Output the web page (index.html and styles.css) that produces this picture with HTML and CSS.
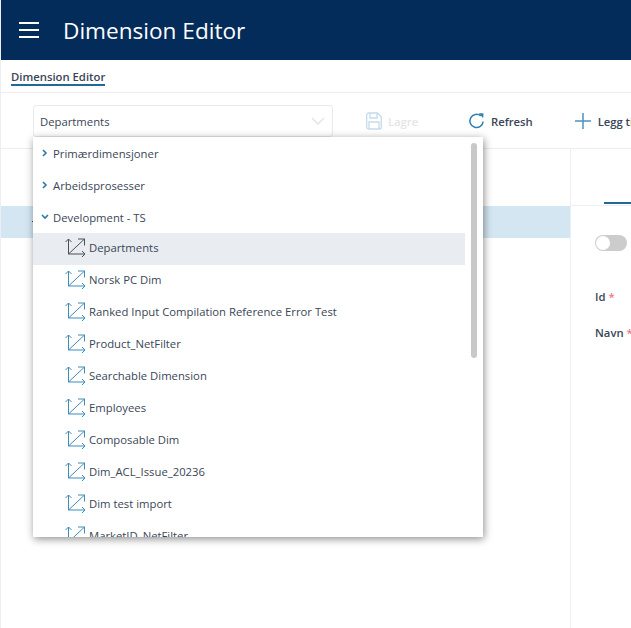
FILE: index.html
```html
<!DOCTYPE html>
<html lang="en">
<head>
  <meta charset="UTF-8" />
  <title>Dimension Editor</title>
  <link rel="stylesheet" href="styles.css">
</head>
<body>
  <svg class="defs" width="0" height="0">
    <symbol id="dim" viewBox="0 0 21 19">
      <path d="M3.500 16V1M0.500 4l3-3 3 3M3.500 16H20M17 13l3 3-3 3M3.500 16L19.500 1M13 1h6.500v6.500" fill="none" stroke="currentColor" stroke-width="1"/>
    </symbol>
  </svg>
  <div class="app">
    <header class="topbar">
      <div class="burger"><span></span><span></span><span></span></div>
      <h1>Dimension Editor</h1>
    </header>
    <nav class="tabs"><span class="tab">Dimension Editor</span></nav>
    <div class="toolbar">
      <div class="select">
        <span class="select-value">Departments</span>
        <svg class="caret" width="14" height="8" viewBox="0 0 14 8"><path d="M1 1l6 6 6-6" fill="none" stroke="#e3e5ea" stroke-width="1.500"/></svg>
      </div>
      <div class="tool disabled">
        <svg width="16" height="18" viewBox="0 0 16 18"><path d="M0.700 3a2 2 0 0 1 2-2h8.800l3.800 3.800V15a2 2 0 0 1-2 2H2.700a2 2 0 0 1-2-2zM4 1v5h7V1M3 17v-7h10v7" fill="none" stroke="#c3dcec" stroke-width="1.300"/></svg>
        <span class="tool-label">Lagre</span>
      </div>
      <div class="tool refresh">
        <svg width="17" height="18" viewBox="0 0 18 18"><path d="M16 9.500A7 7 0 1 1 13.500 3.500" fill="none" stroke="#2f7fb0" stroke-width="1.600"/><path d="M11.500 0.500l5 0.500-0.500 5z" fill="#2f7fb0"/></svg>
        <span class="tool-label">Refresh</span>
      </div>
      <div class="tool add">
        <svg width="18" height="18" viewBox="0 0 18 18"><path d="M9 1v16M1 9h16" fill="none" stroke="#4b93bf" stroke-width="1.500"/></svg>
        <span class="tool-label">Legg til</span>
      </div>
    </div>
    <div class="panes">
      <div class="left">
        <div class="left-head"></div>
        <div class="left-row"><span class="peek"></span></div>
      </div>
      <div class="right">
        <div class="right-head"><span class="right-tab"></span></div>
        <div class="form">
          <div class="switch"><span class="knob"></span></div>
          <div class="field first">Id <em>*</em></div>
          <div class="field">Navn <em>*</em></div>
        </div>
      </div>
    </div>

    <div class="dropdown">
      <div class="thumb"></div>
      <ul class="list">
        <li class="group"><svg width="8" height="8" viewBox="0 0 6 8"><path d="M1 1l3 3-3 3" fill="none" stroke="#2a7aa8" stroke-width="1.600"/></svg>Primærdimensjoner</li>
        <li class="group"><svg width="8" height="8" viewBox="0 0 6 8"><path d="M1 1l3 3-3 3" fill="none" stroke="#2a7aa8" stroke-width="1.600"/></svg>Arbeidsprosesser</li>
        <li class="group"><svg width="8" height="6" viewBox="0 0 8 6"><path d="M1 1l3 3 3-3" fill="none" stroke="#2a7aa8" stroke-width="1.600"/></svg>Development - TS</li>
        <li class="item active"><svg width="21" height="19"><use href="#dim"/></svg>Departments</li>
        <li class="item"><svg width="21" height="19"><use href="#dim"/></svg>Norsk PC Dim</li>
        <li class="item"><svg width="21" height="19"><use href="#dim"/></svg>Ranked Input Compilation Reference Error Test</li>
        <li class="item"><svg width="21" height="19"><use href="#dim"/></svg>Product_NetFilter</li>
        <li class="item"><svg width="21" height="19"><use href="#dim"/></svg>Searchable Dimension</li>
        <li class="item"><svg width="21" height="19"><use href="#dim"/></svg>Employees</li>
        <li class="item"><svg width="21" height="19"><use href="#dim"/></svg>Composable Dim</li>
        <li class="item"><svg width="21" height="19"><use href="#dim"/></svg>Dim_ACL_Issue_20236</li>
        <li class="item"><svg width="21" height="19"><use href="#dim"/></svg>Dim test import</li>
        <li class="item"><svg width="21" height="19"><use href="#dim"/></svg>MarketID_NetFilter</li>
      </ul>
    </div>
  </div>
</body>
</html>
```

FILE: styles.css
```css
* {
  box-sizing: border-box;
}
html, body {
  margin: 0;
  height: 100%;
  overflow: hidden;
}
body {
  font-family: "Open Sans", "Noto Sans", sans-serif;
  font-size: 11.3px;
  color: #3a4656;
  background: #ffffff;
}
.defs {
  position: absolute;
}
.app {
  position: relative;
  height: 628px;
  width: 631px;
  border-left: 1px solid #eceef5;
  overflow: hidden;
}
.topbar {
  height: 60px;
  background: #042c5a;
  color: #ffffff;
  display: flex;
  align-items: center;
  padding-left: 18px;
}
.topbar h1 {
  margin: 1px 0 0 24px;
  font-size: 22.6px;
  font-weight: 400;
  white-space: nowrap;
}
.burger {
  width: 20px;
  display: flex;
  flex-direction: column;
  gap: 5px;
}
.burger span {
  height: 2px;
  background: #ffffff;
}
.tabs {
  height: 33px;
  padding: 8px 0 0 10px;
  border-bottom: 1px solid #eceef5;
}
.tab {
  display: inline-block;
  height: 18px;
  line-height: 17px;
  font-weight: 600;
  border-bottom: 2px solid #1f6a96;
  white-space: nowrap;
}
.toolbar {
  height: 56px;
  display: flex;
  align-items: center;
  padding: 0 0 0 32px;
  border-bottom: 1px solid #eceef5;
  white-space: nowrap;
}
.select {
  width: 300px;
  height: 32px;
  flex-shrink: 0;
  padding: 0 7px 0 6px;
  display: flex;
  align-items: center;
  justify-content: space-between;
  border: 1px solid #e8eaf0;
  border-radius: 3px;
}
.select-value {
  padding-top: 1px;
}
.tool {
  display: flex;
  align-items: center;
  gap: 6px;
  font-weight: 600;
  flex-shrink: 0;
}
.tool-label {
  padding-top: 1px;
  letter-spacing: -0.05px;
}
.disabled {
  margin-left: 33px;
  color: #e4e6ea;
}
.refresh {
  margin-left: 50px;
}
.add {
  margin-left: 41px;
}
.panes {
  display: flex;
  height: 479px;
}
.left {
  width: 570px;
  flex-shrink: 0;
  border-right: 1px solid #eceef5;
}
.left-head {
  height: 57px;
}
.left-row {
  height: 32px;
  padding: 15px 0 0 31px;
  background: #d4e6f2;
}
.peek {
  display: block;
  width: 1px;
  height: 1px;
  background: #3a4656;
}
.right {
  flex: 1;
  min-width: 0;
}
.right-head {
  height: 57px;
  border-bottom: 1px solid #eceef5;
  padding: 53px 0 0 33px;
}
.right-tab {
  display: block;
  height: 2px;
  background: #1f6a96;
}
.form {
  padding: 29px 0 0 24px;
}
.switch {
  width: 32px;
  height: 16px;
  border-radius: 8px;
  background: #cccccc;
  padding: 1px;
}
.knob {
  display: block;
  width: 14px;
  height: 14px;
  border-radius: 50%;
  background: #ffffff;
}
.field {
  margin-top: 16px;
  height: 20px;
  line-height: 20px;
  font-weight: 600;
  white-space: nowrap;
}
.field.first {
  margin-top: 36px;
}
.field em {
  font-style: normal;
  color: #f0787c;
}
.dropdown {
  position: absolute;
  left: 32px;
  top: 137px;
  width: 450px;
  height: 400px;
  background: #ffffff;
  overflow: hidden;
  box-shadow: 1px 2px 8px rgba(0, 0, 0, 0.45);
}
.thumb {
  position: absolute;
  right: 6px;
  top: 6px;
  width: 6px;
  height: 215px;
  border-radius: 3px;
  background: #c8c8c8;
}
.list {
  list-style: none;
  margin: 0;
  padding: 0;
  width: 432px;
}
.list li {
  display: flex;
  align-items: center;
  white-space: nowrap;
}
.group {
  height: 32px;
  padding-left: 8px;
}
.group svg {
  margin-right: 4px;
  flex-shrink: 0;
}
.item {
  height: 32px;
  padding: 0 0 3px 32px;
}
.item svg {
  margin-right: 3px;
  color: #3f8cbb;
  flex-shrink: 0;
}
.item.active {
  background: #e9ecf1;
}
.item.active svg {
  color: #4a5058;
}
```
